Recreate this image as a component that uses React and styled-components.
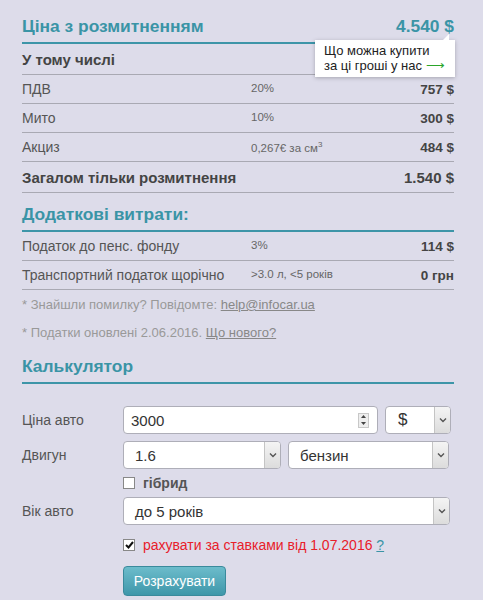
import React from 'react'
import styled, { createGlobalStyle } from 'styled-components'

const Global = createGlobalStyle`
  body {
    margin: 0;
    background: #dddcea;
    font-family: "Liberation Sans", Arial, sans-serif;
  }
`

const Page = styled.div`
  width: 432px;
  padding: 16px 0 0 22px;
  color: #555;
`

const Title = styled.div`
  position: relative;
  display: flex;
  justify-content: space-between;
  font-size: 17.4px;
  line-height: 20px;
  font-weight: bold;
  color: #3a94a6;
  padding-bottom: 6px;
  border-bottom: 2px solid #3d95a8;
  margin-top: ${p => p.top || 0}px;
`

const Row = styled.div`
  display: flex;
  align-items: center;
  height: ${p => p.h || 28}px;
  border-bottom: 1px solid #a9a9b3;
  font-size: ${p => (p.bold ? 15 : 14)}px;
  font-weight: ${p => (p.bold ? 'bold' : 'normal')};
  color: ${p => (p.bold ? '#444' : '#555')};
`

const Name = styled.div`
  width: ${p => (p.wide ? 'auto' : '229px')};
`

const Rate = styled.div`
  flex: 1;
  font-size: 11.5px;
  color: #666;
  align-self: flex-start;
  padding-top: 7px;
`

const Sum = styled.div`
  font-weight: bold;
  color: #444;
  margin-left: auto;
  font-size: ${p => (p.big ? 15 : 13.5)}px;
`

const Note = styled.div`
  font-size: 13px;
  color: #999;
  margin-top: ${p => p.top || 0}px;
  line-height: 15px;
  a {
    color: #888;
  }
`

const Tip = styled.div`
  position: absolute;
  right: -1px;
  top: 24px;
  width: 131px;
  padding: 3px 0 4px 9px;
  background: #fff;
  font-size: 13px;
  line-height: 15px;
  font-weight: normal;
  color: #222;
  box-shadow: 0 1px 4px rgba(0, 0, 0, 0.25);
  &:before {
    content: '';
    position: absolute;
    right: 6px;
    top: -6px;
    border-left: 6px solid transparent;
    border-bottom: 6px solid #fff;
  }
  span {
    color: #2aa52a;
  }
`

const Form = styled.div`
  margin-top: 22px;
  display: flex;
  flex-direction: column;
  gap: 7px;
`

const FormRow = styled.div`
  display: flex;
  align-items: center;
  gap: 7px;
  height: 28px;
`

const Label = styled.div`
  width: 94px;
  font-size: 14px;
  color: #555;
`

const Field = styled.div`
  box-sizing: border-box;
  width: ${p => p.w}px;
  height: 28px;
  display: flex;
  align-items: center;
  background: #fff;
  border: 1px solid #aeaeb8;
  border-radius: 4px;
  padding-left: ${p => p.pad || 7}px;
  font-size: ${p => p.fs || 15}px;
  color: #333;
  overflow: hidden;
`

const Arrow = styled.div`
  margin-left: auto;
  width: 15px;
  height: 100%;
  background: linear-gradient(#f4f4f4, #dcdcdc);
  border-left: 1px solid #c4c4c4;
  display: flex;
  align-items: center;
  justify-content: center;
`

const Spin = styled.div`
  margin-left: auto;
  margin-right: 8px;
  width: 9px;
  height: 13px;
  border: 1px solid #c8c8c8;
  background: #eee;
  display: flex;
  flex-direction: column;
  align-items: center;
  justify-content: space-around;
`

const Check = styled.label`
  display: flex;
  align-items: center;
  gap: 8px;
  height: 14px;
  line-height: 14px;
  margin-left: 101px;
  font-size: 14px;
  font-weight: ${p => (p.bold ? 'bold' : 'normal')};
  color: ${p => p.color || '#555'};
  margin-top: ${p => p.top || 0}px;
  a {
    color: #3a94a6;
  }
`

const Box = styled.span`
  box-sizing: border-box;
  width: 12px;
  height: 12px;
  background: #fff;
  border: 1px solid #888;
  display: flex;
  align-items: center;
  justify-content: center;
`

const Button = styled.button`
  display: block;
  margin: 14px 0 0 101px;
  width: 103px;
  height: 30px;
  border: 1px solid #3a8a9c;
  border-radius: 4px;
  background: linear-gradient(#6cbccb, #3f97aa);
  color: #fff;
  font-family: "Liberation Sans", Arial, sans-serif;
  font-size: 14px;
  padding: 0;
`

const Chevron = () => (
  <svg width="8" height="6" viewBox="0 0 8 6">
    <path d="M1 1.5 L4 4.5 L7 1.5" fill="none" stroke="#555" strokeWidth="1.4" />
  </svg>
)

const Select = ({ w, children, pad, fs }) => (
  <Field w={w} pad={pad} fs={fs}>
    {children}
    <Arrow><Chevron /></Arrow>
  </Field>
)

export default function App() {
  return (
    <Page>
      <Global />
      <Title>
        <span>Ціна з розмитненням</span>
        <span>4.540 $</span>
        <Tip>
          Що можна купити<br />за ці гроші у нас <span>⟶</span>
        </Tip>
      </Title>
      <Row h={30} bold><Name>У тому числі</Name></Row>
      <Row><Name>ПДВ</Name><Rate>20%</Rate><Sum>757 $</Sum></Row>
      <Row><Name>Мито</Name><Rate>10%</Rate><Sum>300 $</Sum></Row>
      <Row><Name>Акциз</Name><Rate>0,267€ за см<sup style={{ fontSize: 8 }}>3</sup></Rate><Sum>484 $</Sum></Row>
      <Row h={30} bold><Name wide>Загалом тільки розмитнення</Name><Sum big>1.540 $</Sum></Row>
      <Title top={11}><span>Додаткові витрати:</span></Title>
      <Row><Name>Податок до пенс. фонду</Name><Rate>3%</Rate><Sum>114 $</Sum></Row>
      <Row><Name>Транспортний податок щорічно</Name><Rate>&gt;3.0 л, &lt;5 років</Rate><Sum>0 грн</Sum></Row>
      <Note top={7}>* Знайшли помилку? Повідомте: <a href="#">help@infocar.ua</a></Note>
      <Note top={13}>* Податки оновлені 2.06.2016. <a href="#">Що нового?</a></Note>
      <Title top={16}><span>Калькулятор</span></Title>
      <Form>
        <FormRow>
          <Label>Ціна авто</Label>
          <Field w={255}>
            3000
            <Spin>
              <svg width="5" height="3" viewBox="0 0 5 3"><path d="M0 3 L2.5 0 L5 3Z" fill="#444" /></svg>
              <svg width="5" height="3" viewBox="0 0 5 3"><path d="M0 0 L2.5 3 L5 0Z" fill="#444" /></svg>
            </Spin>
          </Field>
          <Select w={66} pad={12} fs={17}>$</Select>
        </FormRow>
        <FormRow>
          <Label>Двигун</Label>
          <Select w={158} pad={11}>1.6</Select>
          <Select w={161} pad={11}>бензин</Select>
        </FormRow>
        <Check bold>
          <Box />гібрид
        </Check>
        <FormRow>
          <Label>Вік авто</Label>
          <Select w={327} pad={11}>до 5 років</Select>
        </FormRow>
        <Check color="#e8202a" top={6}>
          <Box>
            <svg width="9" height="8" viewBox="0 0 9 8"><path d="M1 4 L3.5 6.5 L8 1" fill="none" stroke="#111" strokeWidth="2" /></svg>
          </Box>
          <span>рахувати за ставками від 1.07.2016 <a href="#">?</a></span>
        </Check>
      </Form>
      <Button>Розрахувати</Button>
    </Page>
  )
}
